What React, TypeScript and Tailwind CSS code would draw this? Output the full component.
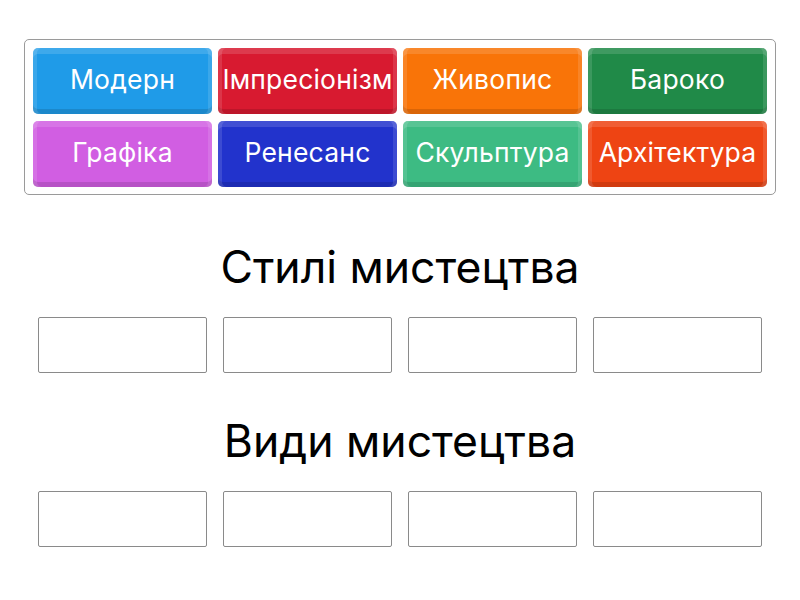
import React from 'react';

const tiles = [
  { label: 'Модерн', cls: 'bg-[#1f9be8]' },
  { label: 'Імпресіонізм', cls: 'bg-[#d81a30]' },
  { label: 'Живопис', cls: 'bg-[#f97408]' },
  { label: 'Бароко', cls: 'bg-[#208a48]' },
  { label: 'Графіка', cls: 'bg-[#d15ee2]' },
  { label: 'Ренесанс', cls: 'bg-[#2233cc]' },
  { label: 'Скульптура', cls: 'bg-[#3dbb83]' },
  { label: 'Архітектура', cls: 'bg-[#ee4413]' },
];

const bevel =
  'shadow-[inset_0_6px_0_rgba(255,255,255,0.14),inset_4px_0_0_rgba(255,255,255,0.12),inset_-4px_0_0_rgba(255,255,255,0.12),inset_0_-5px_0_rgba(0,0,0,0.12)]';

function DropRow() {
  return (
    <div className="grid grid-cols-4 gap-4 mx-[38px]">
      {[0, 1, 2, 3].map(i => (
        <div key={i} className="h-14 border border-[#8a8a8a] rounded-[2px] bg-white" />
      ))}
    </div>
  );
}

export default function App() {
  return (
    <div className="w-[800px] h-[600px] bg-white overflow-hidden" style={{ fontFamily: 'Inter, "Noto Sans", sans-serif' }}>
      <div className="mx-6 mt-[39px] border border-[#9a9a9a] rounded-[5px] p-2 pb-[7px]">
        <div className="grid grid-cols-4 gap-x-[6px] gap-y-[7px]">
          {tiles.map(t => (
            <div key={t.label} className={`h-[66px] rounded-[5px] flex items-center justify-center text-white text-[26.5px] tracking-[0.2px] whitespace-nowrap pb-[2px] ${t.cls} ${bevel}`}>
              {t.label}
            </div>
          ))}
        </div>
      </div>
      <h2 className="mt-12 text-center text-[44.5px] leading-[48px] text-black">Стилі мистецтва</h2>
      <div className="mt-[26px]"><DropRow /></div>
      <h2 className="mt-[44px] text-center text-[44.5px] leading-[48px] text-black">Види мистецтва</h2>
      <div className="mt-[26px]"><DropRow /></div>
    </div>
  );
}
